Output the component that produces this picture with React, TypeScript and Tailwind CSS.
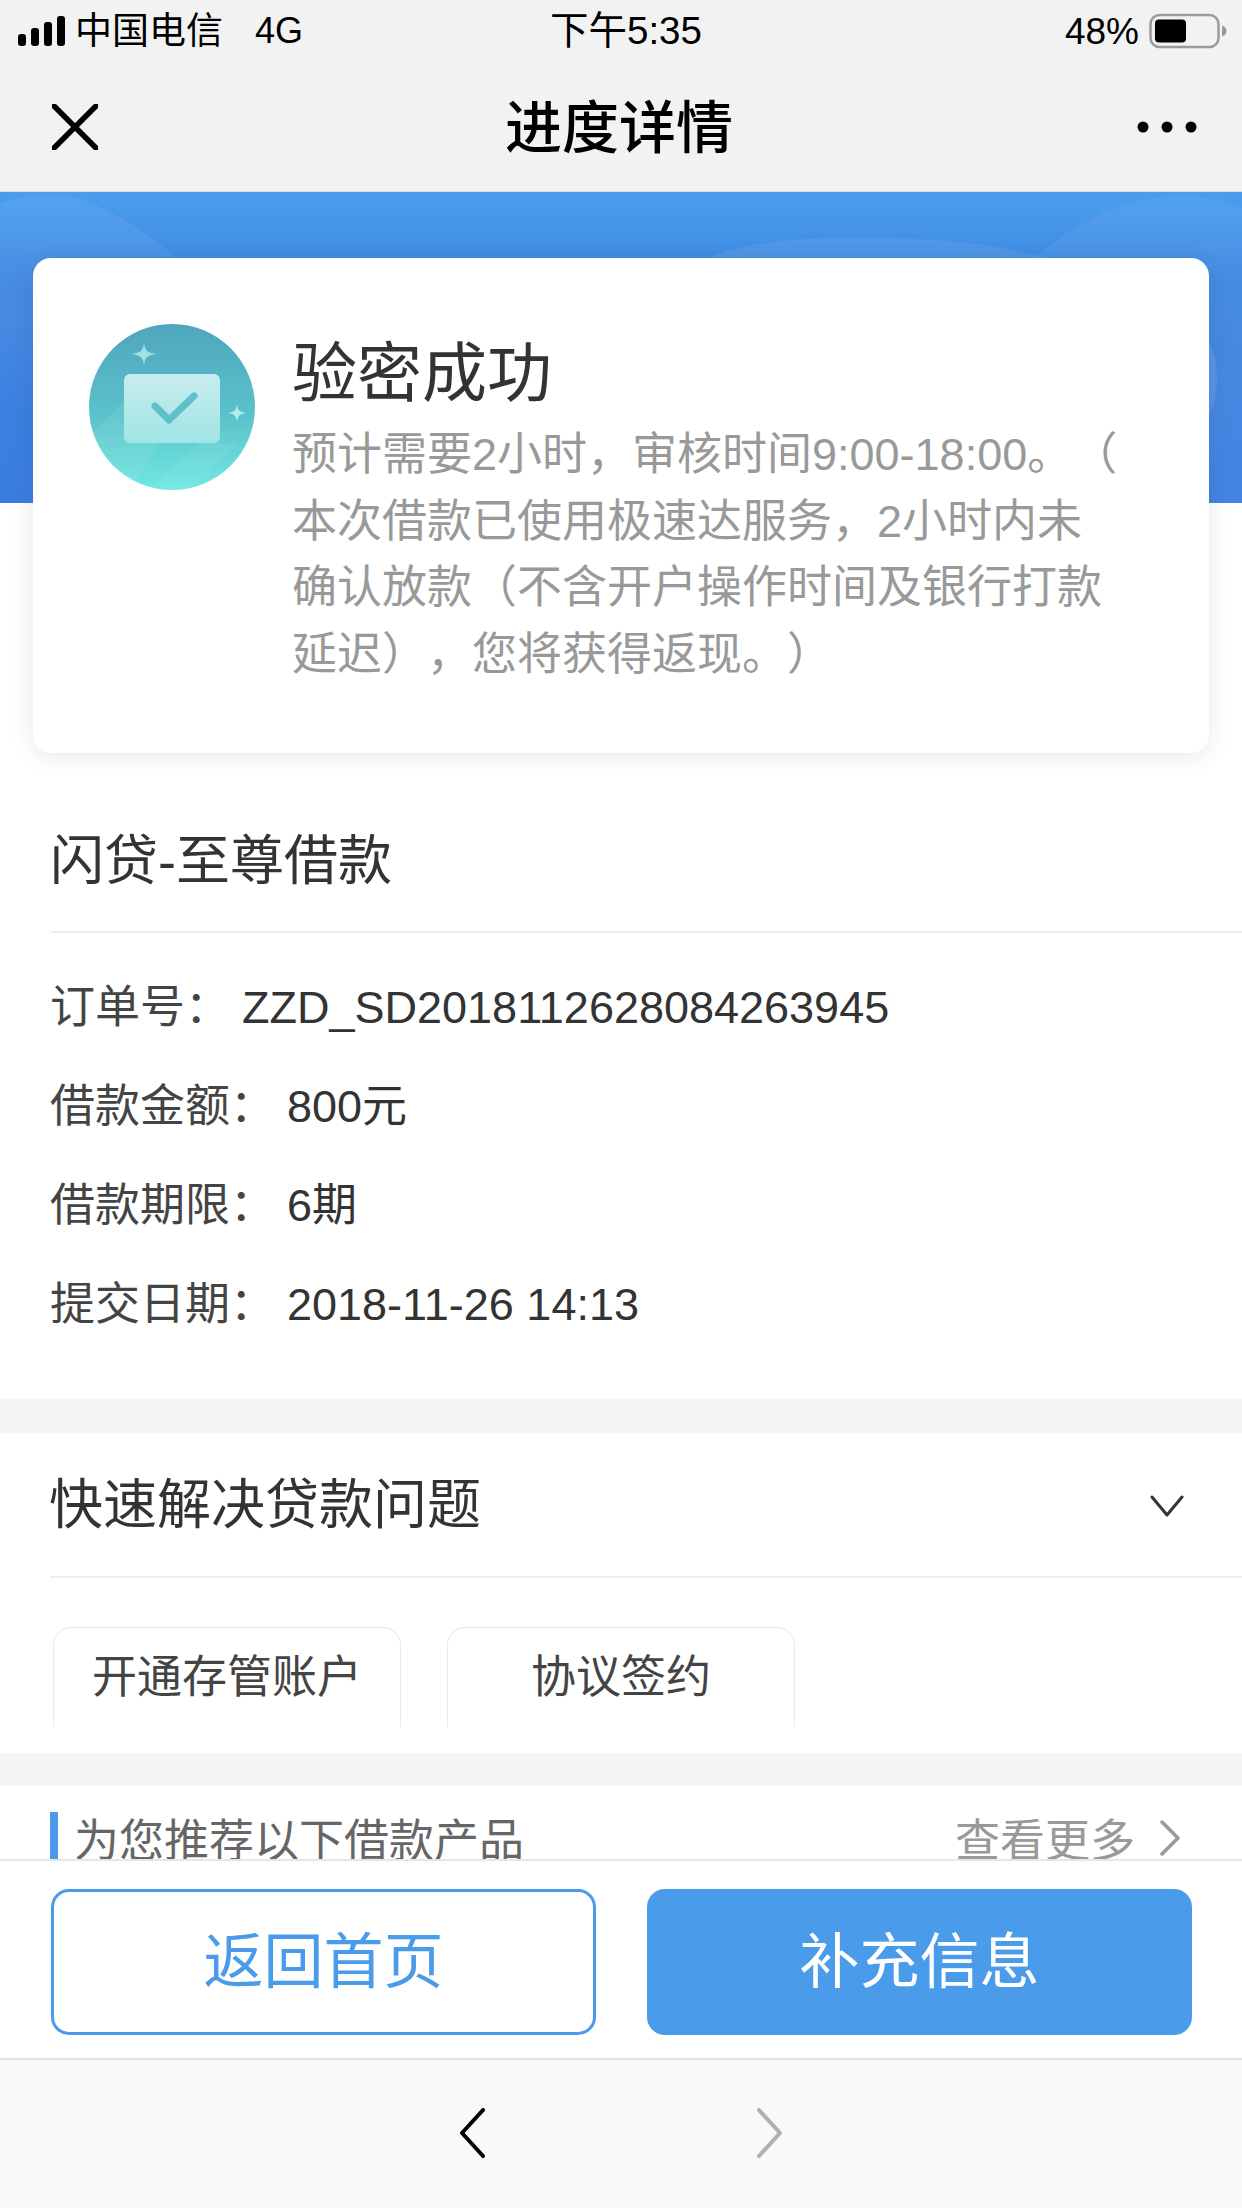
import React from "react";

function Signal() {
  return (
    <svg width="48" height="30" viewBox="0 0 48 30" className="mr-3">
      <rect x="0" y="18" width="8" height="12" rx="3" fill="#000" />
      <rect x="13" y="12" width="8" height="18" rx="3" fill="#000" />
      <rect x="26" y="6" width="8" height="24" rx="3" fill="#000" />
      <rect x="39" y="0" width="8" height="30" rx="3" fill="#000" />
    </svg>
  );
}

function Battery() {
  return (
    <svg width="78" height="36" viewBox="0 0 78 36" className="ml-[10px]">
      <rect x="1.5" y="2" width="68" height="32" rx="9" fill="none" stroke="#9a9a9a" strokeWidth="2.5" />
      <rect x="6" y="6.5" width="31" height="23" rx="4" fill="#000" />
      <path d="M73 12.5c3 1 4.5 3 4.5 5.5s-1.500 4.500-4.500 5.500z" fill="#9a9a9a" />
    </svg>
  );
}

function SuccessIcon() {
  return (
    <svg width="166" height="166" viewBox="0 0 166 166" className="shrink-0">
      <defs>
        <linearGradient id="disc" x1="0" y1="0" x2="0" y2="1">
          <stop offset="0" stopColor="#4fa6bd" />
          <stop offset="0.55" stopColor="#5bc2cb" />
          <stop offset="1" stopColor="#70e8e1" />
        </linearGradient>
        <linearGradient id="card" x1="0" y1="0" x2="0" y2="1">
          <stop offset="0" stopColor="#c8ecef" />
          <stop offset="1" stopColor="#9fe5e5" />
        </linearGradient>
        <clipPath id="round">
          <circle cx="83" cy="83" r="83" />
        </clipPath>
      </defs>
      <circle cx="83" cy="83" r="83" fill="url(#disc)" />
      <path d="M0 112L50 62L70 120L40 166L0 166Z" fill="#ffffff" opacity="0.07" clipPath="url(#round)" />
      <path d="M60 166L110 119L150 119L100 166Z" fill="#ffffff" opacity="0.06" clipPath="url(#round)" />
      <rect x="35" y="50" width="96" height="69" rx="6" fill="url(#card)" />
      <path d="M66 82L80 96L105 72" fill="none" stroke="#5fbfcb" strokeWidth="7" strokeLinecap="round" strokeLinejoin="round" />
      <path d="M55 19C56 27 59 29 68 30C59 31 56 33 55 41C54 33 51 31 42 30C51 29 54 27 55 19Z" fill="#a5dfe3" />
      <path d="M148 80C149 86 150 88 157 89C150 90 149 92 148 98C147 92 146 90 139 89C146 88 147 86 148 80Z" fill="#b4ecec" />
    </svg>
  );
}

function InfoRow({ label, value }: { label: string; value: string }) {
  return (
    <div className="flex h-[99px] items-center text-[45px] text-[#333333]">
      <span className="-ml-px mr-[12px] text-[#444444]">{label}</span>
      <span>{value}</span>
    </div>
  );
}

export default function App() {
  return (
    <div className="relative flex h-[2208px] w-[1242px] flex-col overflow-hidden bg-white font-['Liberation_Sans','Noto_Sans_CJK_SC',sans-serif] [text-spacing-trim:space-all]">
      {/* status + nav */}
      <div className="h-[191px] shrink-0 bg-[#f2f2f2]">
        <div className="relative flex h-[62px] items-center justify-between pl-[18px] pr-[15px] text-[37px] leading-none text-black">
          <div className="flex items-center">
            <Signal />
            <span className="-ml-[3px]">中国电信</span>
            <span className="ml-[32px] text-[36px]">4G</span>
          </div>
          <span className="absolute left-[550px] text-[38.500px]">下午5:35</span>
          <div className="flex items-center">
            <span className="text-[37px]">48%</span>
            <Battery />
          </div>
        </div>
        <div className="flex h-[129px] items-center justify-between pl-[52px] pr-[45px]">
          <svg width="46" height="46" viewBox="0 0 46 46">
            <path d="M2 2L44 44M44 2L2 44" stroke="#000" strokeWidth="5.500" strokeLinecap="round" />
          </svg>
          <span className="ml-[3px] pt-[3px] text-[57px] font-medium leading-none text-black">进度详情</span>
          <svg width="60" height="12" viewBox="0 0 60 12">
            <circle cx="6" cy="6" r="5.500" fill="#000" />
            <circle cx="30" cy="6" r="5.500" fill="#000" />
            <circle cx="54" cy="6" r="5.500" fill="#000" />
          </svg>
        </div>
      </div>

      {/* blue banner */}
      <div className="relative h-[312px] shrink-0 overflow-hidden border-t border-[#dddddd] bg-gradient-to-b from-[#4a9eed] from-0% via-[#3d85e1] via-30% to-[#3a7de0]">
        <svg width="1242" height="312" viewBox="0 0 1242 312" className="absolute left-0 top-0">
          <defs>
            <linearGradient id="hillFade" x1="0" y1="0" x2="0" y2="1">
              <stop offset="0" stopColor="#ffffff" stopOpacity="0.06" />
              <stop offset="0.4" stopColor="#ffffff" stopOpacity="0.05" />
              <stop offset="0.7" stopColor="#ffffff" stopOpacity="0" />
            </linearGradient>
          </defs>
          <path d="M0 12C30 0 70 0 100 15C150 40 190 70 206 110L240 312L0 312Z" fill="url(#hillFade)" />
          <path d="M705 67C760 45 820 46 871 46C940 46 1000 52 1050 67L1120 312L640 312Z" fill="#ffffff" opacity="0.07" />
          <path d="M1034 67C1080 25 1130 4 1180 4C1205 4 1225 8 1242 16L1242 312L1000 312Z" fill="#ffffff" opacity="0.05" />
          <ellipse cx="1190" cy="187" rx="27" ry="52" fill="#ffffff" opacity="0.1" />
        </svg>
      </div>

      {/* status card */}
      <div className="relative mx-[33px] mt-[-245px] flex h-[495px] w-[1176px] shrink-0 rounded-[18px] bg-white pl-[56px] pt-[66px] shadow-[0_4px_24px_rgba(0,0,0,0.09)]">
        <SuccessIcon />
        <div className="ml-[37px]">
          <div className="mt-[12px] text-[65px] leading-[76px] text-[#333333]">验密成功</div>
          <div className="mt-[10px] whitespace-nowrap text-[45px] leading-[66.500px] text-[#999999]">
            预计需要2小时，审核时间9:00-18:00。（
            <br />
            本次借款已使用极速达服务，2小时内未
            <br />
            确认放款（不含开户操作时间及银行打款
            <br />
            延迟），您将获得返现。）
          </div>
        </div>
      </div>

      {/* loan details */}
      <div className="ml-[51px] flex h-[180px] shrink-0 items-center border-b-2 border-[#eeeeee] pt-[38px] text-[54px] text-[#333333]">
        <span className="-ml-px">闪贷-至尊借款</span>
      </div>
      <div className="flex h-[466px] shrink-0 flex-col px-[51px] pt-[25px]">
        <InfoRow label="订单号：" value="ZZD_SD2018112628084263945" />
        <InfoRow label="借款金额：" value="800元" />
        <InfoRow label="借款期限：" value="6期" />
        <InfoRow label="提交日期：" value="2018-11-26 14:13" />
      </div>

      <div className="h-[34px] shrink-0 bg-[#f5f5f5]" />

      {/* quick solve */}
      <div className="ml-[50px] flex h-[145px] shrink-0 items-center justify-between border-b-2 border-[#eeeeee] pr-[58px] pt-[2px] text-[54px] text-[#333333]">
        <span className="-ml-px">快速解决贷款问题</span>
        <svg width="34" height="22" viewBox="0 0 34 22">
          <path d="M2 2L17 20L32 2" fill="none" stroke="#333" strokeWidth="3" strokeLinecap="round" strokeLinejoin="round" />
        </svg>
      </div>
      <div className="flex h-[175px] shrink-0 gap-[46px] pl-[53px] pt-[49px]">
        <div className="flex h-[100px] w-[348px] items-center justify-center rounded-t-[18px] border border-b-0 border-[#e8e8e8] text-[45px] text-[#444444]">
          开通存管账户
        </div>
        <div className="flex h-[100px] w-[348px] items-center justify-center rounded-t-[18px] border border-b-0 border-[#e8e8e8] text-[45px] text-[#444444]">
          协议签约
        </div>
      </div>

      <div className="h-[33px] shrink-0 bg-[#f5f5f5]" />

      {/* recommendation */}
      <div className="flex h-[75px] shrink-0 items-end justify-between overflow-hidden border-b-2 border-[#e6e6e6] pl-[50px] pr-[61px]">
        <div className="flex items-end">
          <div className="h-[47px] w-[8px] bg-[#4a9ceb]" />
          <span className="ml-[16px] translate-y-[9px] text-[45px] leading-[52px] text-[#666666]">为您推荐以下借款产品</span>
        </div>
        <div className="flex items-center">
          <span className="translate-y-[9px] text-[45px] leading-[52px] text-[#999999]">查看更多</span>
          <svg width="22" height="36" viewBox="0 0 22 36" className="ml-[24px] translate-y-[5px]">
            <path d="M3 2L19 18L3 34" fill="none" stroke="#999" strokeWidth="3.500" strokeLinecap="round" strokeLinejoin="round" />
          </svg>
        </div>
      </div>

      {/* actions */}
      <div className="flex h-[199px] shrink-0 gap-[51px] border-b-2 border-[#e2e2e2] pl-[51px] pt-[28px]">
        <div className="flex h-[146px] w-[545px] items-center justify-center rounded-[18px] border-[3px] border-[#4a9ceb] pt-[2px] text-[60px] text-[#4a9ceb]">
          返回首页
        </div>
        <div className="flex h-[146px] w-[545px] items-center justify-center rounded-[18px] bg-[#4a9ceb] pt-[2px] text-[60px] text-white">
          补充信息
        </div>
      </div>

      {/* browser toolbar */}
      <div className="flex flex-1 items-center justify-center gap-[272px] bg-[#f9f9fb] pb-[2px]">
        <svg width="26" height="50" viewBox="0 0 26 50">
          <path d="M24 2L3 25L24 48" fill="none" stroke="#000" strokeWidth="4" strokeLinecap="round" strokeLinejoin="round" />
        </svg>
        <svg width="26" height="50" viewBox="0 0 26 50">
          <path d="M2 2L23 25L2 48" fill="none" stroke="#b0b0b0" strokeWidth="4" strokeLinecap="round" strokeLinejoin="round" />
        </svg>
      </div>
    </div>
  );
}
